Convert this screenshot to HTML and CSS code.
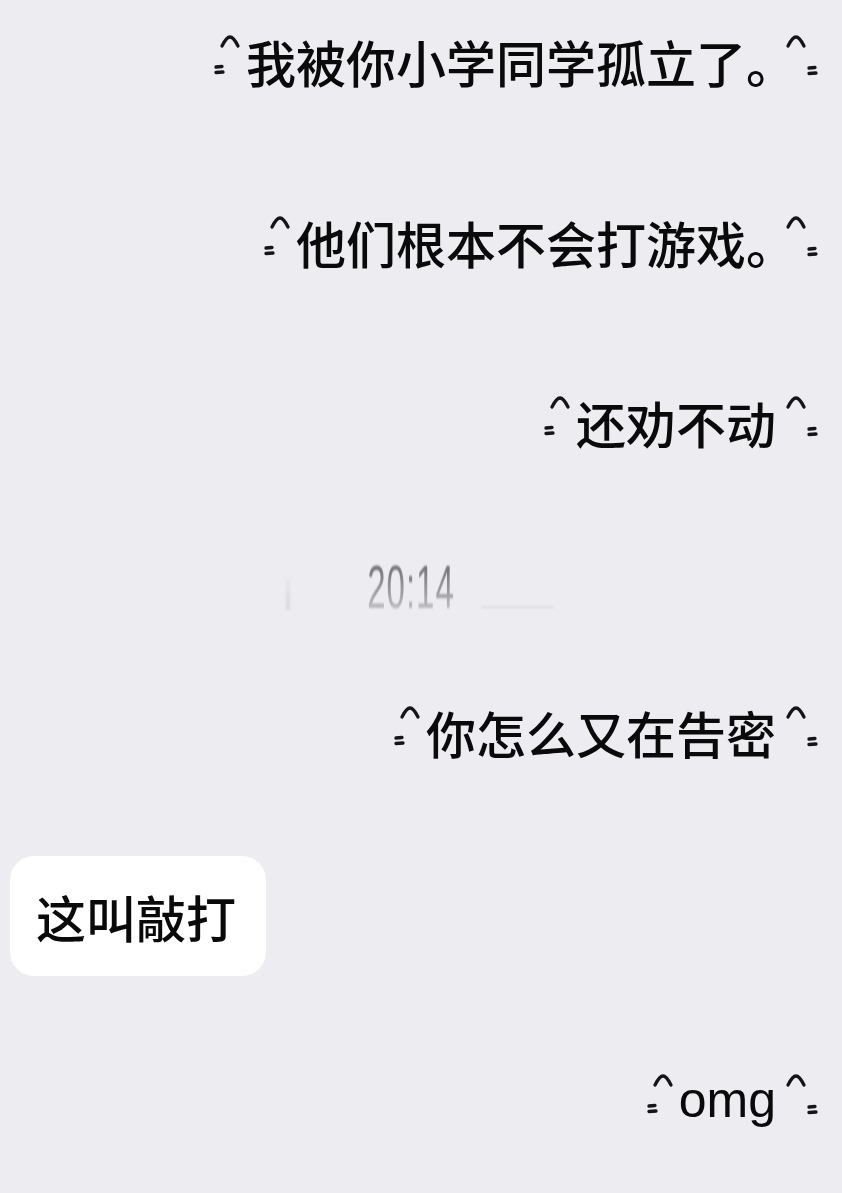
FILE: index.html
```html
<!DOCTYPE html>
<html lang="zh-CN">
<head>
<meta charset="utf-8">
<title>Chat</title>
<link rel="stylesheet" href="styles.css">
</head>
<body>
<main class="chat">
  <div class="msg right row1">
    <svg class="deco-l" width="32" height="60" viewBox="0 0 32 60"><path d="M8 15 C11 9 13 6 16 6 C19 6 21 9 24 15"/><path d="M2 36 L8 35.5 M2 41.5 L9 41"/></svg>
    <span class="text">我被你小学同学孤立了<span class="punct">。</span></span>
    <svg class="deco-r" width="43" height="60" viewBox="0 0 43 60"><path d="M12 15 C15 9 17 6 20 6 C23 6 25 9 28 15"/><path d="M33 37 L39 36.5 M33 42.5 L40 42"/></svg>
  </div>
  <div class="msg right row2">
    <svg class="deco-l" width="32" height="60" viewBox="0 0 32 60"><path d="M8 15 C11 9 13 6 16 6 C19 6 21 9 24 15"/><path d="M2 36 L8 35.5 M2 41.5 L9 41"/></svg>
    <span class="text">他们根本不会打游戏<span class="punct">。</span></span>
    <svg class="deco-r" width="43" height="60" viewBox="0 0 43 60"><path d="M12 15 C15 9 17 6 20 6 C23 6 25 9 28 15"/><path d="M33 37 L39 36.5 M33 42.5 L40 42"/></svg>
  </div>
  <div class="msg right row3">
    <svg class="deco-l" width="32" height="60" viewBox="0 0 32 60"><path d="M8 15 C11 9 13 6 16 6 C19 6 21 9 24 15"/><path d="M2 36 L8 35.5 M2 41.5 L9 41"/></svg>
    <span class="text">还劝不动</span>
    <svg class="deco-r" width="43" height="60" viewBox="0 0 43 60"><path d="M12 15 C15 9 17 6 20 6 C23 6 25 9 28 15"/><path d="M33 37 L39 36.5 M33 42.5 L40 42"/></svg>
  </div>
  <div class="time-row">
    <span class="smudge smudge-l"></span>
    <span class="time">20:14</span>
    <span class="smudge smudge-r"></span>
  </div>
  <div class="msg right row4">
    <svg class="deco-l" width="32" height="60" viewBox="0 0 32 60"><path d="M8 15 C11 9 13 6 16 6 C19 6 21 9 24 15"/><path d="M2 36 L8 35.5 M2 41.5 L9 41"/></svg>
    <span class="text">你怎么又在告密</span>
    <svg class="deco-r" width="43" height="60" viewBox="0 0 43 60"><path d="M12 15 C15 9 17 6 20 6 C23 6 25 9 28 15"/><path d="M33 37 L39 36.5 M33 42.5 L40 42"/></svg>
  </div>
  <div class="msg left row5">
    <div class="bubble">这叫敲打</div>
  </div>
  <div class="msg right row6">
    <svg class="deco-l" width="32" height="60" viewBox="0 0 32 60"><path d="M8 15 C11 9 13 6 16 6 C19 6 21 9 24 15"/><path d="M2 36 L8 35.5 M2 41.5 L9 41"/></svg>
    <span class="text latin">omg</span>
    <svg class="deco-r" width="43" height="60" viewBox="0 0 43 60"><path d="M12 15 C15 9 17 6 20 6 C23 6 25 9 28 15"/><path d="M33 37 L39 36.5 M33 42.5 L40 42"/></svg>
  </div>
</main>
</body>
</html>
```
FILE: styles.css
```css
html, body {
  margin: 0;
  padding: 0;
  background: #ececf1;
}
body {
  width: 842px;
  height: 1193px;
  overflow: hidden;
  font-family: "Noto Sans CJK SC", "Liberation Sans", sans-serif;
  color: #0a0a0a;
}
.chat {
  display: flex;
  flex-direction: column;
  padding-top: 31px;
}
.msg {
  display: flex;
  height: 60px;
  align-items: flex-start;
}
.msg.right {
  justify-content: flex-end;
  padding-right: 23px;
}
.msg.left {
  justify-content: flex-start;
  padding-left: 10px;
  height: auto;
}
.text {
  font-size: 50px;
  line-height: 60px;
  font-weight: 500;
  white-space: nowrap;
  font-feature-settings: "halt";
}
.punct {
  padding-right: 5px;
}
.text.latin {
  font-family: "Liberation Sans", "Noto Sans CJK SC", sans-serif;
  font-weight: 400;
  font-feature-settings: normal;
}
.deco-l, .deco-r {
  flex: none;
  display: block;
}
.deco-l path, .deco-r path {
  fill: none;
  stroke: #151515;
  stroke-width: 3.3;
  stroke-linecap: round;
  stroke-linejoin: round;
}
.row2 { margin-top: 121px; }
.row3 { margin-top: 120px; }
.time-row {
  margin-top: 100px;
  height: 60px;
  display: flex;
  justify-content: center;
  align-items: center;
  padding-right: 20px;
  position: relative;
}
.time {
  font-family: "Liberation Sans", sans-serif;
  font-size: 33px;
  line-height: 60px;
  letter-spacing: 1px;
  display: inline-block;
  transform: translateY(6px) scaleY(1.85);
  background: linear-gradient(to bottom, #707072 28%, #a0a0a4 55%, #d8d8dc 80%);
  -webkit-background-clip: text;
  background-clip: text;
  color: transparent;
  filter: blur(0.6px);
}
.smudge {
  position: absolute;
  background: linear-gradient(to bottom, #e6e6eb, #d8d8dd);
  filter: blur(1px);
}
.smudge-l {
  left: 286px;
  top: 28px;
  width: 4px;
  height: 30px;
}
.smudge-r {
  left: 482px;
  top: 54px;
  width: 72px;
  height: 2px;
}
.row4 { margin-top: 90px; }
.row5 { margin-top: 94px; }
.bubble {
  background: #ffffff;
  border-radius: 24px;
  padding: 30px 30px 30px 26px;
  font-size: 50px;
  line-height: 60px;
  font-weight: 500;
  white-space: nowrap;
}
.row6 { margin-top: 94px; }
```
